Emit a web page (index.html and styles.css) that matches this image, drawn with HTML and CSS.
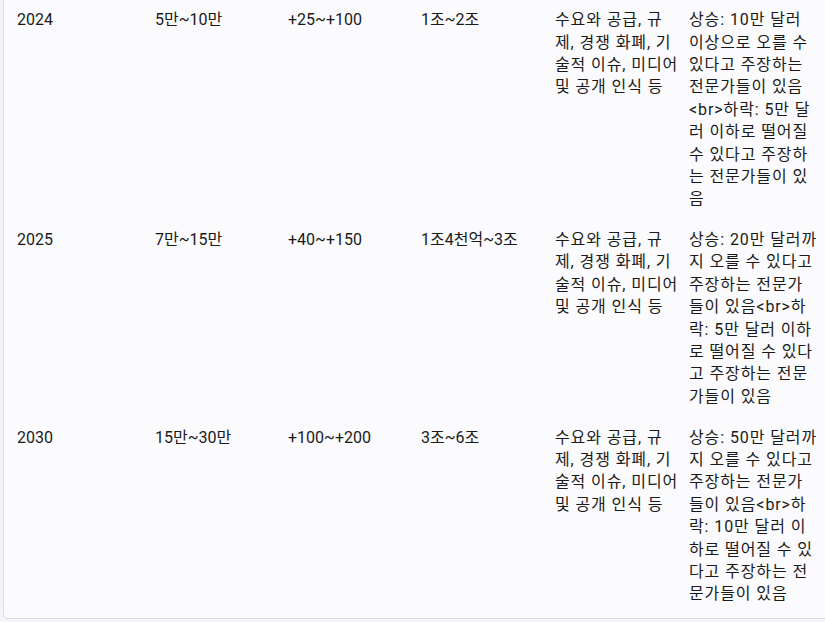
FILE: index.html
```html
<!DOCTYPE html>
<html lang="ko">
<head>
<meta charset="utf-8">
<title>비트코인 전망</title>
<link rel="stylesheet" href="styles.css">
</head>
<body>
<div class="page">
  <div class="card">
    <table class="forecast">
      <colgroup>
        <col class="c-year">
        <col class="c-price">
        <col class="c-change">
        <col class="c-cap">
        <col class="c-factor">
        <col class="c-note">
      </colgroup>
      <tbody>
        <tr>
          <td>2024</td>
          <td>5만~10만</td>
          <td>+25~+100</td>
          <td>1조~2조</td>
          <td class="wide">수요와 공급, 규제, 경쟁 화폐, 기술적 이슈, 미디어 및 공개 인식 등</td>
          <td class="wide note">상승: 10만 달러 이상으로 오를 수 있다고 주장하는 전문가들이 있음&lt;br&gt;하락: 5만 달러 이하로 떨어질 수 있다고 주장하는 전문가들이 있음</td>
        </tr>
        <tr>
          <td>2025</td>
          <td>7만~15만</td>
          <td>+40~+150</td>
          <td>1조4천억~3조</td>
          <td class="wide">수요와 공급, 규제, 경쟁 화폐, 기술적 이슈, 미디어 및 공개 인식 등</td>
          <td class="wide note">상승: 20만 달러까지 오를 수 있다고 주장하는 전문가들이 있음&lt;br&gt;하락: 5만 달러 이하로 떨어질 수 있다고 주장하는 전문가들이 있음</td>
        </tr>
        <tr>
          <td>2030</td>
          <td>15만~30만</td>
          <td>+100~+200</td>
          <td>3조~6조</td>
          <td class="wide">수요와 공급, 규제, 경쟁 화폐, 기술적 이슈, 미디어 및 공개 인식 등</td>
          <td class="wide note">상승: 50만 달러까지 오를 수 있다고 주장하는 전문가들이 있음&lt;br&gt;하락: 10만 달러 이하로 떨어질 수 있다고 주장하는 전문가들이 있음</td>
        </tr>
      </tbody>
    </table>
  </div>
</div>
</body>
</html>
```
FILE: styles.css
```css
html, body {
  margin: 0;
  padding: 0;
  overflow: hidden;
  background: #f4f4f6;
}

body {
  font-family: Roboto, "Noto Sans CJK KR", "Liberation Sans", sans-serif;
  font-size: 16px;
  line-height: 1.4;
  color: #1a1a1a;
}

.page {
  padding-left: 3px;
  width: 900px;
}

.card {
  margin-top: -12px;
  padding: 11px 0 3px 8px;
  background: #fbfbfd;
  border: 1px solid #dcdcde;
  border-radius: 5px;
}

.forecast {
  border-collapse: collapse;
  table-layout: fixed;
  width: 871px;
}

.forecast td {
  padding: 9.2px 4px 9.2px 5px;
  vertical-align: top;
  text-align: left;
}

.forecast td.wide {
  letter-spacing: 0.9px;
}

.forecast td.note {
  padding-right: 65px;
}

.c-year { width: 138px; }
.c-price { width: 133px; }
.c-change { width: 133px; }
.c-cap { width: 134px; }
.c-factor { width: 134px; }
.c-note { width: 199px; }
```
